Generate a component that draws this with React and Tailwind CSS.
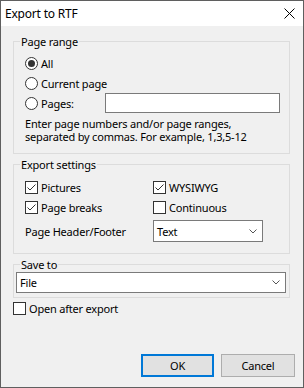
function Radio({ checked, children }) {
  return (
    <div className="flex h-[20px] items-center">
      <span className="flex h-[13px] w-[13px] items-center justify-center rounded-full border border-[#333333] bg-white">
        {checked && <span className="h-[7px] w-[7px] rounded-full bg-[#333333]" />}
      </span>
      <span className="ml-[3px]">{children}</span>
    </div>
  );
}

function Check({ checked, children }) {
  return (
    <div className="flex h-[20px] items-center">
      <span className="flex h-[13px] w-[13px] items-center justify-center border border-[#333333] bg-white">
        {checked && (
          <svg width="11" height="11" viewBox="0 0 11 11">
            <path d="M1.5 5.5 L4 8 L9.5 2.5" fill="none" stroke="#333333" strokeWidth="1" />
          </svg>
        )}
      </span>
      <span className="ml-[3px]">{children}</span>
    </div>
  );
}

function Chevron() {
  return (
    <svg width="8" height="5" viewBox="0 0 8 5">
      <path d="M0.5 0.5 L4 4 L7.5 0.5" fill="none" stroke="#555555" strokeWidth="1" />
    </svg>
  );
}

function Select({ value, className }) {
  return (
    <div className={`flex items-center justify-between border border-[#7a7a7a] bg-white pl-[3px] pr-[5px] ${className}`}>
      <span>{value}</span>
      <Chevron />
    </div>
  );
}

export default function App() {
  return (
    <div className="flex h-[388px] w-[304px] flex-col border border-[#5f5f5f] bg-[#f0f0f0] text-[11px] leading-[15px] tracking-[-0.2px] text-black [font-family:'Noto_Sans',sans-serif]">
      <div className="flex h-[25px] items-center justify-between bg-white pl-[4px] pr-[8px]">
        <span className="text-[12px]">Export to RTF</span>
        <svg width="11" height="11" viewBox="0 0 11 11">
          <path d="M0.5 0.5 L10.5 10.5 M10.5 0.5 L0.5 10.5" stroke="#000000" strokeWidth="1" />
        </svg>
      </div>

      <div className="flex flex-1 flex-col px-[12px]">
        <fieldset className="mt-[8px] w-[277px] border border-[#dcdcdc]">
          <legend className="ml-[6px] px-[1px]">Page range</legend>
          <div className="pb-[10px] pl-[11px] pr-[9px] pt-[4px]">
            <Radio checked>All</Radio>
            <Radio>Current page</Radio>
            <div className="flex h-[20px] items-center justify-between">
              <Radio>Pages:</Radio>
              <div className="h-[20px] w-[175px] border border-[#7a7a7a] bg-white" />
            </div>
            <p className="mt-[4px] leading-[13px]">
              Enter page numbers and/or page ranges,
              <br />
              separated by commas. For example, 1,3,5-12
            </p>
          </div>
        </fieldset>

        <fieldset className="mt-[3px] w-[277px] border border-[#dcdcdc]">
          <legend className="ml-[6px] px-[1px]">Export settings</legend>
          <div className="pb-[11px] pl-[11px] pt-[5px]">
            <div className="grid grid-cols-[128px_1fr]">
              <Check checked>Pictures</Check>
              <Check checked>WYSIWYG</Check>
              <Check checked>Page breaks</Check>
              <Check>Continuous</Check>
            </div>
            <div className="mt-[3px] grid grid-cols-[128px_1fr] items-center">
              <span>Page Header/Footer</span>
              <Select value="Text" className="h-[22px] w-[110px]" />
            </div>
          </div>
        </fieldset>

        <fieldset className="mt-[3px] w-[277px] border border-[#dcdcdc]">
          <legend className="ml-[6px] px-[1px]">Save to</legend>
          <div className="pb-[4px] pl-[2px] pr-[3px]">
            <Select value="File" className="h-[21px]" />
          </div>
        </fieldset>

        <Check>Open after export</Check>
      </div>

      <div className="flex justify-end gap-[7px] pb-[10px] pr-[8px]">
        <button className="h-[23px] w-[73px] border-2 border-[#0078d7] bg-[#e1e1e1]">OK</button>
        <button className="h-[23px] w-[74px] border border-[#adadad] bg-[#e1e1e1]">Cancel</button>
      </div>
    </div>
  );
}
